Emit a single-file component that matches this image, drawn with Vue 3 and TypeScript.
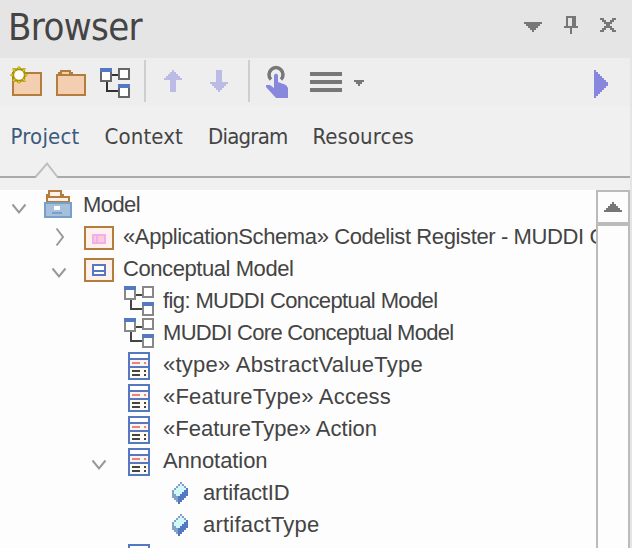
<script setup lang="ts">
import { ref } from 'vue'

type IconKind = 'model' | 'codelist' | 'package' | 'diagram' | 'class' | 'attribute'

interface TreeNode {
  label: string
  kind: IconKind
  level: number
  width: number
  state?: 'open' | 'closed'
}

const tabs = [
  { name: 'Project', width: 69 },
  { name: 'Context', width: 78.5 },
  { name: 'Diagram', width: 79.5 },
  { name: 'Resources', width: 101.5 },
]
const active = ref('Project')

const nodes: TreeNode[] = [
  { label: 'Model', kind: 'model', level: 0, width: 57, state: 'open' },
  { label: '«ApplicationSchema» Codelist Register - MUDDI C', kind: 'codelist', level: 1, width: 482, state: 'closed' },
  { label: 'Conceptual Model', kind: 'package', level: 1, width: 170.5, state: 'open' },
  { label: 'fig: MUDDI Conceptual Model', kind: 'diagram', level: 2, width: 274.5 },
  { label: 'MUDDI Core Conceptual Model', kind: 'diagram', level: 2, width: 290.5 },
  { label: '«type» AbstractValueType', kind: 'class', level: 2, width: 260 },
  { label: '«FeatureType» Access', kind: 'class', level: 2, width: 228 },
  { label: '«FeatureType» Action', kind: 'class', level: 2, width: 214 },
  { label: 'Annotation', kind: 'class', level: 2, width: 104.5, state: 'open' },
  { label: 'artifactID', kind: 'attribute', level: 3, width: 86.5 },
  { label: 'artifactType', kind: 'attribute', level: 3, width: 116.5 },
  { label: '', kind: 'class', level: 2, width: 0 },
]

// Tracks a label out or in so that it takes up the given width.
const vFit = {
  mounted(el: HTMLElement, binding: { value: number }) {
    const count = (el.textContent ?? '').length
    if (!count) return
    const natural = el.getBoundingClientRect().width
    el.style.letterSpacing = `${(binding.value - natural) / count}px`
  },
}
</script>

<template>
  <div class="browser">
    <header class="titlebar">
      <h1 v-fit="134">Browser</h1>
      <div class="window-tools">
        <svg width="18" height="18" class="px"><path d="M0 6h18v2h-2v2h-2v2h-2v2h-2v2H8v-2H6v-2H4v-2H2V8H0z" fill="#777" /></svg>
        <svg width="14" height="18" class="px"><path d="M2 0h10v10h2v2H8v6H6v-6H0v-2h2zM4 2v8h4V2z" fill="#777" fill-rule="evenodd" /></svg>
        <svg width="16" height="18" class="px"><path d="M0 2h4v2h2v2h4V4h2V2h4v2h-2v2h-2v2h-2v2h2v2h2v2h2v2h-4v-2h-2v-2H6v2H4v2H0v-2h2v-2h2v-2h2V8H4V6H2V4H0z" fill="#777" /></svg>
      </div>
    </header>

    <div class="toolbar">
      <svg class="tool" width="32" height="32">
        <path class="px" d="M3 5h28v22H3z" fill="#f3ceb0" stroke="#b27d3d" stroke-width="2" />
        <g transform="translate(0 -2)">
          <path d="M9 0l2.500 2.500L15.500 2l-.5 4.500L18 9l-3 2.500.5 4.500-4-.5L9 18l-2.500-2.500-4 .5.5-4.500L0 9l3-2.500L2.500 2l4 .5z" fill="#a8960a" />
          <path d="M9 0v3M9 15v3M0 9h3M15 9h3M3 3l2 2M13 13l2 2M15 3l-2 2M5 13l-2 2" stroke="#e2c92a" stroke-width="1.500" />
          <circle cx="9" cy="9" r="4.800" fill="#fff" />
        </g>
      </svg>
      <svg class="tool folder px" width="30" height="32">
        <path d="M1 7h28v20H1zM3 7V5h2V3h9v2h2v2" fill="#f3ceb0" stroke="#b27d3d" stroke-width="2" />
      </svg>
      <svg class="tool diagram px" width="30" height="30">
        <path d="M12 7h6M7 14v9h11" fill="none" stroke="#333" stroke-width="2" />
        <path d="M1 1h10v12H1zM19 1h10v10H19zM19 17h10v12H19z" fill="#fff" stroke="#666" stroke-width="2" />
        <path d="M0 0h12v4H0zM18 16h12v4H18z" fill="#5578c2" />
      </svg>
      <i class="separator first" />
      <svg class="tool up px" width="18" height="22"><path d="M8 0h2v2h2v2h2v2h2v2h2v2h-6v12H6V10H0V8h2V6h2V4h2V2h2z" fill="#bbbbe6" /></svg>
      <svg class="tool down px" width="18" height="22"><path d="M6 0h6v12h6v2h-2v2h-2v2h-2v2h-2v2H8v-2H6v-2H4v-2H2v-2H0v-2h6z" fill="#bbbbe6" /></svg>
      <i class="separator second" />
      <svg class="tool hand" width="22" height="32">
        <path d="M5 13.500A7 7 0 1 1 15 13.500" fill="none" stroke="#777" stroke-width="3.500" />
        <path d="M8 9q2-3 4 0v7l8 3 2 3v10H10L0 21v-2h4l4 3z" fill="#8787dd" />
      </svg>
      <svg class="tool menu px" width="32" height="20"><path d="M0 0h32v4H0zM0 8h32v4H0zM0 16h32v4H0z" fill="#777" /></svg>
      <svg class="tool caret px" width="10" height="6"><path d="M0 0h10v2H8v2H6v2H4V4H2V2H0z" fill="#777" /></svg>
      <svg class="tool play px" width="14" height="28"><path d="M0 0h2v2h2v2h2v2h2v2h2v2h2v2h2v4h-2v2h-2v2H8v2H6v2H4v2H2v2H0z" fill="#8787dd" /></svg>
    </div>

    <nav class="tabs">
      <button v-for="t in tabs" :key="t.name" :class="{ active: t.name === active }" @click="active = t.name">
        <span v-fit="t.width">{{ t.name }}</span>
      </button>
    </nav>
    <svg class="tab-line" width="630" height="30">
      <path d="M0 17h36M57 17h573" stroke="#aaa" stroke-width="2" />
      <path d="M35.500 17L47 3.500 57.500 17" fill="none" stroke="#bebebe" stroke-width="2" />
    </svg>

    <div class="content">
      <ul class="tree">
        <li v-for="(n, i) in nodes" :key="i" :class="['row', 'level-' + n.level]">
          <svg class="expander" width="40" height="32">
            <path v-if="n.state === 'open'" d="M8.500 14.500L15 22.500 21.500 14.500" />
            <path v-else-if="n.state === 'closed'" d="M12.500 6.500L19 15 12.500 23.500" />
          </svg>
          <svg class="icon px" width="30" height="32">
            <g v-if="n.kind === 'model'">
              <path d="M3 12V5h2V1h12v4h2v2h6v5z" fill="#fff0e9" stroke="#b27d3d" stroke-width="2" />
              <path d="M4 7h16" stroke="#b27d3d" stroke-width="2" />
              <path d="M1 13h26v14H1z" fill="#a6bfdb" stroke="#789fca" stroke-width="2" />
              <path d="M10 16h6v4h-6z" fill="#fff" />
              <path d="M8 22h10v2H8z" fill="#789fca" />
            </g>
            <g v-else-if="n.kind === 'codelist' || n.kind === 'package'">
              <path d="M1 5h28v22H1z" fill="#fff0ec" stroke="#b27d3d" stroke-width="2" />
              <path v-if="n.kind === 'codelist'" d="M9 13h12v8H9zM13 13v8" fill="#f7ced4" stroke="#f2adf2" stroke-width="2" />
              <path v-else d="M9 11h12v10H9zM9 17h12" fill="#fff" stroke="#5578c2" stroke-width="2" />
            </g>
            <g v-else-if="n.kind === 'diagram'">
              <path d="M12 9h6M7 14v9h11" fill="none" stroke="#444" stroke-width="2" />
              <path d="M1 1h10v12H1zM19 1h10v10H19zM19 17h10v12H19z" fill="#fff" stroke="#888" stroke-width="2" />
              <path d="M0 0h12v4H0zM18 16h12v4H18z" fill="#5578c2" />
            </g>
            <g v-else-if="n.kind === 'class'">
              <path d="M5 3h20v26H5z" fill="#fff" stroke="#5578c2" stroke-width="2" />
              <path d="M6 10h18v6H6z" fill="#fff5ee" />
              <path d="M6 18h18v10H6z" fill="#fcfcf2" />
              <path d="M5 9h20M5 17h20" stroke="#5578c2" stroke-width="2" />
              <path d="M8 12h8v2H8zM20 12h2v2h-2z" fill="#ed8181" />
              <path d="M8 20h8v2H8zM20 20h2v2h-2zM8 24h8v2H8zM20 24h2v2h-2z" fill="#444" />
            </g>
            <g v-else>
              <path d="M16 4h2v2h2v2h2v2h2v8h-2v2h-2v2h-2v2h-2v2h-2v-2h-2v-2h-2v-2H8v-8h2v-2h2V8h2V6h2z" fill="#82a2c8" />
              <path d="M24 10v8h-2v2h-2v2h-2v2h-2v2h-2v-8h2v-2h2v-2h2v-2h2v-2z" fill="#5578c2" />
              <path d="M16 6h2v2h2v2h2v2h-2v2h-2v2h-2v2h-4v-2h-2v-4h2v-2h2V8h2z" fill="#d2f7f9" />
            </g>
          </svg>
          <span v-fit="n.width" class="label">{{ n.label }}</span>
        </li>
      </ul>
      <div class="scrollbar">
        <div class="scroll-up">
          <svg class="px" width="18" height="10"><path d="M8 0h2v2h2v2h2v2h2v2h2v2H0V8h2V6h2V4h2V2h2z" fill="#777" /></svg>
        </div>
      </div>
    </div>
  </div>
</template>

<style>
body {
  overflow: hidden;
}
</style>

<style scoped>
.browser {
  box-sizing: border-box;
  width: 632px;
  height: 548px;
  display: flex;
  flex-direction: column;
  overflow: hidden;
  background: #f0f0f0;
  border-right: 2px solid #e5e5e5;
  color: #444;
  font: 22px/32px 'Liberation Sans', Arial, sans-serif;
}
svg {
  display: block;
  flex: none;
  overflow: visible;
}
.px {
  shape-rendering: crispEdges;
}
.titlebar {
  display: flex;
  flex: none;
  align-items: flex-start;
  justify-content: space-between;
  height: 58px;
  margin-right: -2px;
  padding: 0 16px 0 8px;
  box-sizing: border-box;
  background: #e5e5e5;
}
h1 {
  margin: 0;
  font: 38px/54px 'DejaVu Sans', 'DejaVu Sans Condensed', sans-serif;
  font-stretch: condensed;
}
.window-tools {
  display: flex;
  gap: 22px;
  padding-top: 16px;
}
.toolbar {
  display: flex;
  flex: none;
  align-items: flex-start;
  height: 48px;
  padding: 0 22px 0 10px;
  box-sizing: border-box;
  background: #eee;
}
.tool {
  margin-top: 12px;
}
.tool:first-child {
  margin-top: 10px;
}
.diagram {
  margin-top: 10px;
}
.folder {
  margin: 10px 14px 0;
}
.separator {
  width: 2px;
  height: 42px;
  margin-top: 2px;
  background: #cecece;
}
.first {
  margin-left: 14px;
}
.up {
  margin-left: 18px;
}
.down {
  margin-left: 28px;
}
.second {
  margin-left: 20px;
}
.hand {
  margin: 8px 0 0 16px;
}
.menu {
  margin: 14px 0 0 22px;
}
.caret {
  margin: 22px 0 0 12px;
}
.play {
  margin-left: auto;
}
.tabs {
  display: flex;
  flex: none;
  align-items: flex-start;
  gap: 25px;
  height: 54px;
  padding: 15px 0 0 10.5px;
  box-sizing: border-box;
}
.tabs button {
  padding: 0;
  border: 0;
  background: none;
  color: inherit;
  font: 22px/32px 'DejaVu Sans Condensed', 'DejaVu Sans', sans-serif;
  white-space: nowrap;
}
.tabs .active {
  color: #3d5a7d;
}
.content {
  display: flex;
  flex: 1;
  min-height: 0;
  background: #fdfdfd;
}
.tree {
  flex: 1;
  min-width: 0;
  margin: 0;
  padding: 0;
  overflow: hidden;
  list-style: none;
}
.row {
  display: flex;
  height: 32px;
  padding-left: 4px;
}
.level-1 {
  padding-left: 44px;
}
.level-2 {
  padding-left: 84px;
}
.level-3 {
  padding-left: 124px;
}
.expander path {
  fill: none;
  stroke: #999;
  stroke-width: 2;
}
.label {
  flex: none;
  margin-left: 9px;
  line-height: 29px;
  white-space: pre;
}
.scrollbar {
  width: 34px;
  box-sizing: border-box;
  border: 2px solid #bbb;
  border-bottom: 0;
}
.scroll-up {
  display: flex;
  justify-content: center;
  height: 34px;
  padding-top: 10px;
  box-sizing: border-box;
  border-bottom: 4px solid #bbb;
}
</style>
